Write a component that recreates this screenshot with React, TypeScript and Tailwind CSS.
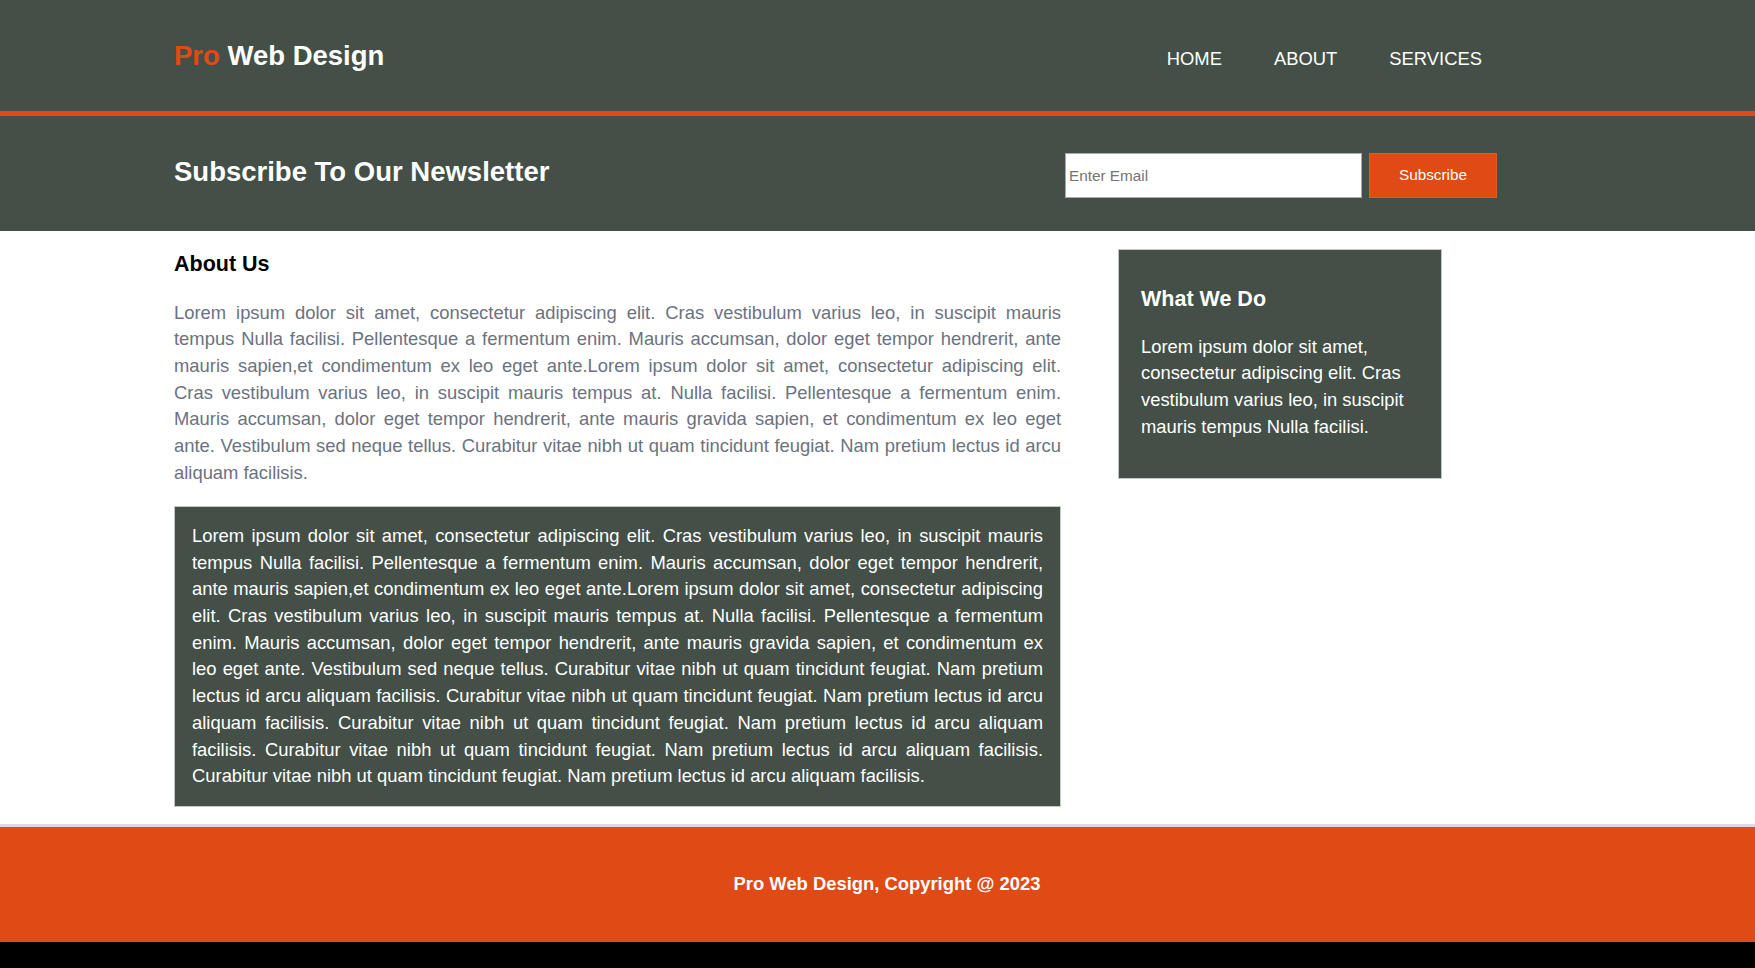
const aboutLines = [
  "Lorem ipsum dolor sit amet, consectetur adipiscing elit. Cras vestibulum varius leo, in suscipit mauris",
  "tempus Nulla facilisi. Pellentesque a fermentum enim. Mauris accumsan, dolor eget tempor hendrerit, ante",
  "mauris sapien,et condimentum ex leo eget ante.Lorem ipsum dolor sit amet, consectetur adipiscing elit.",
  "Cras vestibulum varius leo, in suscipit mauris tempus at. Nulla facilisi. Pellentesque a fermentum enim.",
  "Mauris accumsan, dolor eget tempor hendrerit, ante mauris gravida sapien, et condimentum ex leo eget",
  "ante. Vestibulum sed neque tellus. Curabitur vitae nibh ut quam tincidunt feugiat. Nam pretium lectus id arcu",
];

export default function App() {
  return (
    <div className="min-h-[968px] bg-black font-['Liberation_Sans',Arial,sans-serif]">
      <header className="h-[116px] bg-[#434f47] border-b-[5px] border-[#e04a14]">
        <div className="ml-[174px] w-[1308px] flex justify-between items-baseline pt-[40px]">
          <h1 className="text-[27.5px] leading-[32px] font-bold text-white">
            <span className="text-[#e04a14]">Pro</span> Web Design
          </h1>
          <nav className="flex gap-[52px] text-[18.4px] leading-[22px] text-white">
            <a>HOME</a>
            <a>ABOUT</a>
            <a>SERVICES</a>
          </nav>
        </div>
      </header>

      <section className="h-[115px] bg-[#434f47] pt-[37px]">
        <div className="ml-[174px] w-[1323px] flex justify-between items-start">
          <h2 className="mt-[3px] text-[27.5px] leading-[32px] font-bold text-white">
            Subscribe To Our Newsletter
          </h2>
          <div className="flex gap-[7px]">
            <input
              type="text"
              placeholder="Enter Email"
              className="h-[45px] w-[297px] bg-white border border-[#a9a9a9] px-[3px] text-[15.3px] text-black placeholder:text-[#757575] outline-none"
            />
            <button className="h-[45px] w-[128px] bg-[#e04a14] border border-[#e35a2a] text-[15.3px] text-white">
              Subscribe
            </button>
          </div>
        </div>
      </section>

      <main className="bg-white flex items-start pl-[174px] pt-[17.5px] pb-[17px] gap-[57px]">
        <div className="w-[887px] pt-[3px]">
          <h3 className="text-[21.5px] leading-[25px] font-bold text-black">About Us</h3>
          <p className="mt-[23px] text-[18.4px] leading-[26.7px] text-[#6b7280] text-justify">
            {aboutLines.map((l, i) => (
              <span key={i} className="block whitespace-nowrap [text-align-last:justify]">
                {l}
              </span>
            ))}
            <span className="block">aliquam facilisis.</span>
          </p>
          <div className="mt-[19.5px] bg-[#434f47] border border-[#c4c7c4] px-[17px] py-[16px]">
            <p className="text-[18.4px] leading-[26.7px] text-white text-justify">
              Lorem ipsum dolor sit amet, consectetur adipiscing elit. Cras vestibulum varius leo, in suscipit mauris tempus Nulla facilisi. Pellentesque a fermentum enim. Mauris accumsan, dolor eget tempor hendrerit, ante mauris sapien,et condimentum ex leo eget ante.Lorem ipsum dolor sit amet, consectetur adipiscing elit. Cras vestibulum varius leo, in suscipit mauris tempus at. Nulla facilisi. Pellentesque a fermentum enim. Mauris accumsan, dolor eget tempor hendrerit, ante mauris gravida sapien, et condimentum ex leo eget ante. Vestibulum sed neque tellus. Curabitur vitae nibh ut quam tincidunt feugiat. Nam pretium lectus id arcu aliquam facilisis. Curabitur vitae nibh ut quam tincidunt feugiat. Nam pretium lectus id arcu aliquam facilisis. Curabitur vitae nibh ut quam tincidunt feugiat. Nam pretium lectus id arcu aliquam facilisis. Curabitur vitae nibh ut quam tincidunt feugiat. Nam pretium lectus id arcu aliquam facilisis. Curabitur vitae nibh ut quam tincidunt feugiat. Nam pretium lectus id arcu aliquam facilisis.
            </p>
          </div>
        </div>

        <aside className="w-[324px] bg-[#434f47] border border-[#c4c7c4] pl-[22px] pr-[22px] pt-[37px] pb-[37.5px] text-white">
          <h3 className="text-[21.5px] leading-[25px] font-bold">What We Do</h3>
          <p className="mt-[22px] text-[18.4px] leading-[26.7px]">
            Lorem ipsum dolor sit amet, consectetur adipiscing elit. Cras vestibulum varius leo, in suscipit mauris tempus Nulla facilisi.
          </p>
        </aside>
      </main>

      <footer className="h-[118px] bg-[#e04a14] border-t-[3px] border-[#dcdcdc] flex items-center justify-center pl-[19px]">
        <p className="text-[18.4px] leading-[22px] font-bold text-white">Pro Web Design, Copyright @ 2023</p>
      </footer>
    </div>
  );
}
